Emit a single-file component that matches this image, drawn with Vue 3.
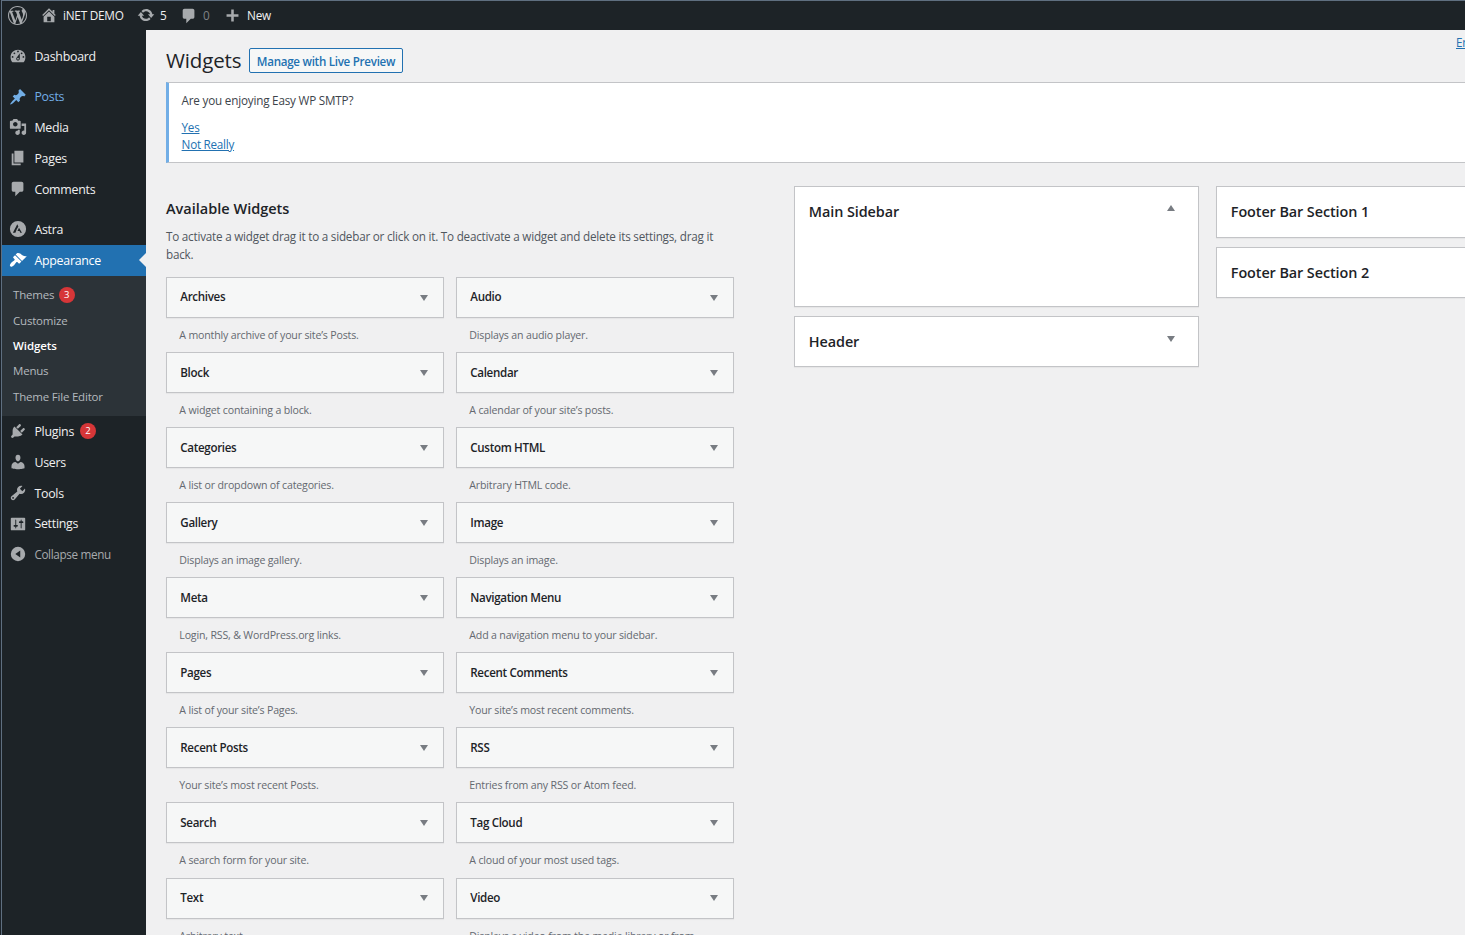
<script setup>
const icons = {
  wordpress: 'M20 10c0-5.51-4.49-10-10-10C4.48 0 0 4.49 0 10c0 5.52 4.48 10 10 10 5.51 0 10-4.48 10-10zM7.78 15.37L4.37 6.22c.55-.02 1.17-.08 1.17-.08.5-.06.44-1.13-.06-1.11 0 0-1.45.11-2.37.11-.18 0-.37 0-.58-.01C4.12 2.69 6.87 1.11 10 1.11c2.33 0 4.45.87 6.05 2.34-.68-.11-1.65.39-1.65 1.58 0 .74.45 1.36.9 2.1.35.61.55 1.36.55 2.46 0 1.49-1.4 5-1.4 5l-3.03-8.37c.54-.02.82-.17.82-.17.5-.05.44-1.25-.06-1.22 0 0-1.44.12-2.38.12-.87 0-2.33-.12-2.33-.12-.5-.03-.56 1.2-.06 1.22l.92.08 1.26 3.41zM17.41 10c.24-.64.74-1.87.43-4.25.7 1.29 1.05 2.71 1.05 4.25 0 3.29-1.73 6.24-4.4 7.78.97-2.59 1.94-5.2 2.92-7.78zM6.1 18.09C3.12 16.65 1.11 13.53 1.11 10c0-1.3.23-2.48.72-3.59C3.25 10.3 4.67 14.2 6.1 18.09zm4.03-6.63l2.58 6.98c-.86.29-1.76.45-2.71.45-.79 0-1.57-.11-2.29-.33.81-2.38 1.62-4.74 2.42-7.1z',
  home: 'M16 8.5l1.53 1.53-1.06 1.06L10 4.6l-6.47 6.49-1.06-1.06L10 2.5l4 4v-2h2v4zm-6-2.46l6 5.99V18H4v-5.97zM12 17v-5H8v5h4z',
  update: 'M10.2 3.28c3.53 0 6.43 2.61 6.92 6h2.08l-3.5 4-3.5-4h2.32c-.45-1.97-2.21-3.45-4.32-3.45-1.45 0-2.73.71-3.54 1.78L4.95 5.66C6.23 4.2 8.11 3.28 10.2 3.28zm-.4 13.44c-3.52 0-6.43-2.61-6.92-6H.8l3.5-4c1.17 1.33 2.33 2.67 3.5 4H5.48c.45 1.97 2.21 3.45 4.32 3.45 1.45 0 2.73-.71 3.54-1.78l1.71 1.95c-1.28 1.46-3.15 2.38-5.25 2.38z',
  plus: 'M17 8.5v3h-5.5V17h-3v-5.5H3v-3h5.5V3h3v5.5z',
  dashboard: 'M3.76 17h12.48c1.34-1.59 2.01-3.6 2.01-6 0-4.56-3.69-8-8.25-8S1.75 6.44 1.75 11c0 2.4.67 4.41 2.01 6zM10 4c.55 0 1 .45 1 1s-.45 1-1 1-1-.45-1-1 .45-1 1-1zM6 6c.55 0 1 .45 1 1s-.45 1-1 1-1-.45-1-1 .45-1 1-1zm8 0c.55 0 1 .45 1 1s-.45 1-1 1-1-.45-1-1 .45-1 1-1zm-5.37 5.55L12 7v6c0 1.1-.9 2-2 2s-2-.9-2-2c0-.57.24-1.08.63-1.45zM4 10c.55 0 1 .45 1 1s-.45 1-1 1-1-.45-1-1 .45-1 1-1zm12 0c.55 0 1 .45 1 1s-.45 1-1 1-1-.45-1-1 .45-1 1-1zm-5 3c0-.55-.45-1-1-1s-1 .45-1 1 .45 1 1 1 1-.45 1-1z',
  posts: 'M10.44 3.02l1.82-1.82 6.36 6.35-1.83 1.82c-1.05-.68-2.48-.57-3.41.36l-.75.75c-.92.93-1.04 2.35-.35 3.41l-1.83 1.82-2.41-2.41-2.8 2.79c-.42.42-3.38 2.71-3.8 2.29s1.86-3.39 2.28-3.81l2.79-2.79L4.1 9.36l1.83-1.82c1.05.69 2.48.57 3.4-.36l.75-.75c.93-.92 1.05-2.35.36-3.41z',
  media: 'M13 11V4c0-.55-.45-1-1-1h-1.67L9 1H5L3.67 3H2c-.55 0-1 .45-1 1v7c0 .55.45 1 1 1h10c.55 0 1-.45 1-1zM7 4.5c1.38 0 2.5 1.12 2.5 2.5S8.38 9.5 7 9.5 4.5 8.38 4.5 7 5.62 4.5 7 4.5zM14 6h5v10.5c0 1.38-1.12 2.5-2.5 2.5S14 17.88 14 16.5s1.12-2.5 2.5-2.5c.17 0 .34.02.5.05V9h-3V6zm-4 8.05V13h2v3.5c0 1.38-1.12 2.5-2.5 2.5S7 17.88 7 16.5 8.12 14 9.5 14c.17 0 .34.02.5.05z',
  pages: 'M6 15V2h10v13H6zm-1 1h8v2H3V5h2v11z',
  comments: 'M5 2h9c1.1 0 2 .9 2 2v7c0 1.1-.9 2-2 2h-2l-5 5v-5H5c-1.1 0-2-.9-2-2V4c0-1.1.9-2 2-2z',
  astra: 'M10 1a9 9 0 1 0 0 18 9 9 0 0 0 0-18zM5.8 14.1H4.3L9.2 4.8l1.2 2.4c-1.4 2.4-2.5 4.5-3.300 6.900zM12.500 14.100l-.8-1.900H9.400l1.700-3.700 3.300 5.600z',
  appearance: 'M14.48 11.06L7.41 3.99l1.5-1.5c.5-.56 2.3-.47 3.51.32 1.21.8 1.43 1.28 2.91 2.1 1.18.64 2.45 1.26 4.45.85zm-.71.71L6.7 4.7 4.93 6.47c-.39.39-.39 1.02 0 1.41l1.06 1.06c.39.39.39 1.03 0 1.42-.6.6-1.43 1.11-2.21 1.69-.35.26-.7.53-1.01.84C1.43 14.23.4 16.08 1.4 17.07c.99 1 2.84-.03 4.18-1.36.31-.31.58-.66.85-1.02.57-.78 1.08-1.61 1.69-2.21.39-.39 1.02-.39 1.41 0l1.06 1.06c.39.39 1.02.39 1.41 0z',
  plugins: 'M13.11 4.36L9.87 7.6 8 5.73l3.24-3.24c.35-.34 1.05-.2 1.56.32.52.51.66 1.21.31 1.55zm-8 1.77l.91-1.12 9.01 9.01-1.19.84c-.71.71-2.63 1.16-3.82 1.16H6.14L4.9 17.26c-.59.59-1.54.59-2.12 0-.59-.58-.59-1.53 0-2.12l1.24-1.24v-3.88c0-1.13.4-3.19 1.09-3.89zm7.26 3.97l3.24-3.24c.34-.35 1.04-.21 1.55.31.52.51.66 1.21.31 1.55l-3.24 3.25z',
  users: 'M10 9.25c-2.27 0-2.73-3.44-2.73-3.44C7 4.02 7.82 2 9.97 2c2.16 0 2.98 2.02 2.71 3.81 0 0-.41 3.44-2.68 3.44zm0 2.57L12.72 10c2.39 0 4.52 2.33 4.52 4.53v2.49s-3.65 1.13-7.24 1.13c-3.65 0-7.24-1.13-7.24-1.13v-2.49c0-2.25 1.94-4.48 4.47-4.48z',
  tools: 'M16.68 9.77c-1.34 1.34-3.3 1.67-4.95.99l-5.41 6.52c-.99.99-2.59.99-3.58 0s-.99-2.59 0-3.57l6.52-5.42c-.68-1.65-.35-3.61.99-4.95 1.28-1.28 3.12-1.62 4.72-1.06l-2.89 2.89 2.82 2.82 2.86-2.87c.53 1.58.18 3.39-1.08 4.65zM3.81 16.21c.4.39 1.04.39 1.43 0 .4-.4.4-1.04 0-1.43-.39-.4-1.03-.4-1.43 0-.39.39-.39 1.03 0 1.43z',
  settings: 'M18 16V4c0-.55-.45-1-1-1H3c-.55 0-1 .45-1 1v12c0 .55.45 1 1 1h14c.55 0 1-.45 1-1zM8 11h1c.55 0 1 .45 1 1s-.45 1-1 1H8v1.5c0 .28-.22.5-.5.5s-.5-.22-.5-.5V13H6c-.55 0-1-.45-1-1s.45-1 1-1h1V5.5c0-.28.22-.5.5-.5s.5.22.5.5V11zm5-2h-1c-.55 0-1-.45-1-1s.45-1 1-1h1V5.5c0-.28.22-.5.5-.5s.5.22.5.5V7h1c.55 0 1 .45 1 1s-.45 1-1 1h-1v5.5c0 .28-.22.5-.5.5s-.5-.22-.5-.5V9z',
  collapse: 'M10 2a8 8 0 1 0 0 16 8 8 0 0 0 0-16zM12.5 6v8L7 10z',
}

const menu = [
  { label: 'Dashboard', icon: 'dashboard' },
  { sep: true },
  { label: 'Posts', icon: 'posts', state: 'hover' },
  { label: 'Media', icon: 'media' },
  { label: 'Pages', icon: 'pages' },
  { label: 'Comments', icon: 'comments' },
  { sep: true },
  { label: 'Astra', icon: 'astra' },
  {
    label: 'Appearance', icon: 'appearance', state: 'current',
    children: [
      { label: 'Themes', badge: 3 },
      { label: 'Customize' },
      { label: 'Widgets', active: true },
      { label: 'Menus' },
      { label: 'Theme File Editor' },
    ],
  },
  { label: 'Plugins', icon: 'plugins', badge: 2 },
  { label: 'Users', icon: 'users' },
  { label: 'Tools', icon: 'tools' },
  { label: 'Settings', icon: 'settings' },
  { label: 'Collapse menu', icon: 'collapse', state: 'muted' },
]

const widgets = [
  ['Archives', 'A monthly archive of your site’s Posts.'],
  ['Audio', 'Displays an audio player.'],
  ['Block', 'A widget containing a block.'],
  ['Calendar', 'A calendar of your site’s posts.'],
  ['Categories', 'A list or dropdown of categories.'],
  ['Custom HTML', 'Arbitrary HTML code.'],
  ['Gallery', 'Displays an image gallery.'],
  ['Image', 'Displays an image.'],
  ['Meta', 'Login, RSS, & WordPress.org links.'],
  ['Navigation Menu', 'Add a navigation menu to your sidebar.'],
  ['Pages', 'A list of your site’s Pages.'],
  ['Recent Comments', 'Your site’s most recent comments.'],
  ['Recent Posts', 'Your site’s most recent Posts.'],
  ['RSS', 'Entries from any RSS or Atom feed.'],
  ['Search', 'A search form for your site.'],
  ['Tag Cloud', 'A cloud of your most used tags.'],
  ['Text', 'Arbitrary text.'],
  ['Video', 'Displays a video from the media library or from'],
]
</script>

<template>
  <div class="screen">
    <header class="bar">
      <svg class="ico wp" viewBox="0 0 20 20"><path :d="icons.wordpress" /></svg>
      <svg class="ico home" viewBox="0 0 20 20"><path :d="icons.home" /></svg>
      <span class="site">iNET DEMO</span>
      <svg class="ico upd" viewBox="0 0 20 20"><path :d="icons.update" /></svg>
      <span class="count">5</span>
      <svg class="ico com" viewBox="0 0 20 20"><path :d="icons.comments" /></svg>
      <span class="zero">0</span>
      <svg class="ico add" viewBox="0 0 20 20"><path :d="icons.plus" /></svg>
      <span class="new">New</span>
    </header>
    <div class="body">
      <nav class="side">
        <template v-for="(m, i) in menu" :key="i">
          <div v-if="m.sep" class="sep"></div>
          <div v-else class="item" :class="m.state">
            <svg class="mico" viewBox="0 0 20 20"><path fill-rule="evenodd" :d="icons[m.icon]" /></svg>
            <span>{{ m.label }}</span>
            <b v-if="m.badge" class="badge">{{ m.badge }}</b>
          </div>
          <div v-if="m.children" class="sub">
            <div v-for="c in m.children" :key="c.label" class="subitem" :class="{ active: c.active }">
              <span>{{ c.label }}</span>
              <b v-if="c.badge" class="badge">{{ c.badge }}</b>
            </div>
          </div>
        </template>
      </nav>
      <main class="main">
        <div class="head">
          <h1>Widgets</h1>
          <a class="button">Manage with Live Preview</a>
          <a class="enable">Enable accessibility mode</a>
        </div>
        <section class="notice">
          <p>Are you enjoying Easy WP SMTP?</p>
          <a>Yes</a>
          <a>Not Really</a>
        </section>
        <div class="columns">
          <section class="avail">
            <h2>Available Widgets</h2>
            <p class="intro">To activate a widget drag it to a sidebar or click on it. To deactivate a widget and delete its settings, drag it<br>back.</p>
            <div class="grid">
              <div v-for="w in widgets" :key="w[0]" class="cell">
                <div class="card"><h3>{{ w[0] }}</h3><i class="tri"></i></div>
                <p>{{ w[1] }}</p>
              </div>
            </div>
          </section>
          <section class="areas first">
            <div class="area open"><h2>Main Sidebar</h2><i class="tri up"></i></div>
            <div class="area"><h2>Header</h2><i class="tri"></i></div>
          </section>
          <section class="areas second">
            <div class="area tall"><h2>Footer Bar Section 1</h2></div>
            <div class="area"><h2>Footer Bar Section 2</h2></div>
          </section>
        </div>
      </main>
    </div>
  </div>
</template>

<style>
html, body { margin: 0; overflow: hidden; }
</style>

<style scoped>
* { box-sizing: border-box; }
.screen { width: 1465px; height: 935px; overflow: hidden; background: #f0f0f1; color: #3c434a; font-family: "Open Sans", "Noto Sans", sans-serif; font-size: 11.7px; letter-spacing: -0.22px; border-left: 1px solid #1b2229; }
h1, h2, h3, p { margin: 0; font-weight: 400; white-space: nowrap; }
span, a { white-space: nowrap; }
.bar { height: 30px; border-top: 1px solid #5f6f80; border-left: 1px solid #5f6f80; background: #1d2327; color: #f0f0f1; display: flex; align-items: center; font-size: 11.8px; padding-bottom: 1px; }
.ico { flex: none; fill: #a7aaad; width: 18px; height: 18px; }
.wp { margin-left: 6px; width: 19px; height: 19px; }
.home { margin-left: 13px; }
.site { margin-left: 5px; width: 69px; letter-spacing: -0.25px; }
.upd { margin-left: 5px; }
.count { margin-left: 5px; width: 16px; }
.com { margin-left: 4px; margin-top: 2px; }
.zero { margin-left: 5px; color: #a7aaad; opacity: .7; width: 19px; }
.add { margin-left: 2px; width: 17px; height: 17px; }
.new { margin-left: 6px; }
.body { display: flex; height: 905px; }
.side { width: 145px; flex: none; background: #1d2327; border-left: 1px solid #5f6f80; padding-top: 11px; }
.sep { height: 9.3px; }
.item { position: relative; height: 30.85px; display: flex; align-items: center; color: #f0f0f1; font-size: 12.4px; letter-spacing: -0.27px; }
.mico { width: 18px; height: 18px; margin: 0 7.4px 0 7px; fill: #a7aaad; flex: none; }
.hover { color: #72aee6; }
.hover .mico { fill: #72aee6; }
.current { background: #2271b1; color: #fff; }
.current .mico { fill: #fff; }
.current::after { content: ""; position: absolute; right: 0; top: 8px; border: 7.5px solid transparent; border-right-color: #f0f0f1; border-left: 0; }
.muted { color: #a7aaad; font-size: 11.7px; letter-spacing: -0.34px; margin-top: -0.6px; }
.badge { width: 16px; height: 16px; border-radius: 50%; background: #d63638; color: #fff; font-size: 9.5px; font-weight: 400; line-height: 16px; text-align: center; margin-left: 6px; letter-spacing: 0; }
.subitem .badge { margin-left: 4.5px; }
.sub { background: #2c3338; height: 140.4px; padding-top: 6.6px; }
.subitem { height: 25.4px; padding-left: 11px; display: flex; align-items: center; color: #b4b9be; font-size: 11.5px; letter-spacing: -0.2px; }
.active { color: #fff; font-weight: 600; letter-spacing: -0.1px; }
.main { flex: 1; min-width: 0; padding-left: 20px; overflow: hidden; }
.head { height: 52px; display: flex; align-items: flex-start; }
h1 { width: 83px; flex: none; font-size: 20.5px; line-height: 28px; margin-top: 16px; color: #1d2327; letter-spacing: -0.15px; }
.button { width: 154px; flex: none; height: 25px; margin-top: 18px; border: 1px solid #2271b1; border-radius: 2px; background: #f6f7f7; color: #2271b1; font-weight: 600; font-size: 11.6px; line-height: 25px; text-align: center; letter-spacing: -0.28px; }
.enable { margin: 4px 0 0 1053px; color: #2271b1; text-decoration: underline; line-height: 16px; flex: none; }
.notice { height: 81px; background: #fff; border: 1px solid #c3c4c7; border-left: 3px solid #72aee6; border-right: 0; padding: 9px 0 0 12.6px; display: flex; flex-direction: column; align-items: flex-start; }
.notice p { line-height: 16px; margin-bottom: 11px; letter-spacing: -0.2px; }
.notice a { line-height: 17px; color: #2271b1; text-decoration: underline; letter-spacing: -0.26px; }
.columns { display: flex; align-items: flex-start; padding-top: 23px; }
.avail { width: 568px; flex: none; padding-top: 12px; }
.avail h2 { font-size: 14.5px; line-height: 22px; font-weight: 600; color: #1d2327; letter-spacing: 0; }
.intro { margin-top: 8px; line-height: 17.5px; color: #50575e; height: 49px; }
.grid { display: grid; grid-template-columns: 278px 278px; column-gap: 12px; grid-auto-rows: 75.07px; }
.card { height: 41px; background: #f6f7f7; border: 1px solid #c3c4c7; box-shadow: 0 1px 1px rgba(0,0,0,.04); display: flex; align-items: center; justify-content: space-between; padding: 0 15px 0 13.3px; }
.card h3 { font-weight: 600; color: #1d2327; font-size: 11.6px; line-height: 16px; margin-top: -0.1px; letter-spacing: -0.33px; }
.tri { width: 0; height: 0; border: 4px solid transparent; border-top: 6px solid #787c82; border-bottom: 0; }
.tri.up { border-top: 0; border-bottom: 6px solid #787c82; }
.cell p { padding-left: 13.3px; margin-top: 9px; line-height: 16px; font-size: 10.6px; letter-spacing: -0.17px; color: #646970; }
.areas { flex: none; }
.first { width: 405px; margin-left: 60px; }
.second { width: 405px; margin-left: 17px; }
.area { height: 51px; margin-bottom: 9px; background: #fff; border: 1px solid #c3c4c7; box-shadow: 0 1px 1px rgba(0,0,0,.04); display: flex; justify-content: space-between; padding: 14px 23px 0 13.8px; }
.area h2 { font-size: 14.4px; line-height: 22px; font-weight: 600; color: #1d2327; letter-spacing: -0.08px; }
.area .tri { margin-top: 5px; }
.area .up { margin-top: 4px; }
.open { height: 121px; }
.tall { height: 52px; }
</style>
